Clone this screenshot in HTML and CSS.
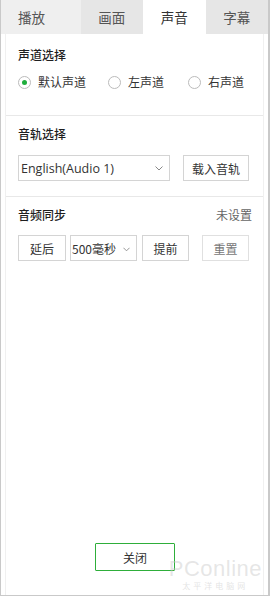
FILE: index.html
```html
<!DOCTYPE html>
<html lang="zh">
<head>
<meta charset="utf-8">
<link rel="stylesheet" href="styles.css">
</head>
<body>
<div class="window">
  <div class="tabs">
    <div class="tab tab-first">播放</div>
    <div class="tab">画面</div>
    <div class="tab active">声音</div>
    <div class="tab">字幕</div>
  </div>
  <div class="panel">
    <section class="sec sec1">
      <div class="title">声道选择</div>
      <div class="radios">
        <label class="radio checked"><span class="dot"></span>默认声道</label>
        <label class="radio r2"><span class="dot"></span>左声道</label>
        <label class="radio r3"><span class="dot"></span>右声道</label>
      </div>
    </section>
    <section class="sec sec2">
      <div class="title">音轨选择</div>
      <div class="row">
        <div class="select track"><span class="en">English(Audio 1)</span>
          <svg class="chev" width="8" height="5" viewBox="0 0 8 5"><path d="M0.5 0.5L4 4L7.5 0.5" fill="none" stroke="#888" stroke-width="1"/></svg>
        </div>
        <div class="btn load">载入音轨</div>
      </div>
    </section>
    <section class="sec sec3">
      <div class="title-row"><span class="title">音频同步</span><span class="status">未设置</span></div>
      <div class="row">
        <div class="btn delay">延后</div>
        <div class="select ms"><span>500毫秒</span>
          <svg class="chev" width="7" height="5" viewBox="0 0 8 5"><path d="M0.5 0.5L4 4L7.5 0.5" fill="none" stroke="#888" stroke-width="1"/></svg>
        </div>
        <div class="btn ahead">提前</div>
        <div class="btn reset">重置</div>
      </div>
    </section>
    <div class="spacer"></div>
    <div class="footer">
      <div class="btn close">关闭</div>
    </div>
  </div>
  <div class="watermark"><span class="wm-logo">PConline</span><span class="wm-sub">太平洋电脑网</span></div>
</div>
</body>
</html>
```
FILE: styles.css
```css
html, body {
  margin: 0;
  padding: 0;
  background: #fff;
}
body {
  font-family: "Noto Sans CJK SC", "Noto Sans", sans-serif;
  font-size: 12px;
  color: #333;
}
.window {
  position: relative;
  width: 270px;
  height: 596px;
  box-sizing: border-box;
  border-left: 1px solid #c9c9c9;
  border-right: 2px solid #c9c9c9;
  border-bottom: 1px solid #c9c9c9;
  display: flex;
  flex-direction: column;
  overflow: hidden;
}
.tabs {
  display: flex;
  height: 34px;
  flex: none;
}
.tab {
  flex: 1;
  display: flex;
  align-items: center;
  justify-content: center;
  background: #e6e6e6;
  color: #555;
  font-size: 13.5px;
}
.tab-first {
  background: #efefef;
  justify-content: flex-start;
  padding-left: 17px;
}
.tab.active {
  background: #fff;
  color: #333;
}
.panel {
  flex: 1;
  margin: 0 4px;
  border-left: 1px solid #f0f0f0;
  border-right: 1px solid #f0f0f0;
  display: flex;
  flex-direction: column;
}
.sec {
  padding: 0 11px 0 12px;
  border-bottom: 1px solid #e8e8e8;
}
.title {
  font-size: 12px;
  line-height: 18px;
  color: #1e1e1e;
  font-weight: 500;
}
.sec1 { padding-top: 12px; padding-bottom: 24px; }
.sec2 { padding-top: 9px; padding-bottom: 15px; }
.sec3 { padding-top: 9px; padding-bottom: 0; border-bottom: none; }
.radios {
  display: flex;
  margin-top: 9px;
  height: 18px;
  align-items: center;
}
.radio {
  display: flex;
  flex: none;
  align-items: center;
  white-space: nowrap;
  font-size: 12px;
  line-height: 18px;
  color: #333;
}
.dot {
  flex: none;
  width: 11px;
  height: 11px;
  border: 1px solid #bbb;
  border-radius: 50%;
  margin-right: 7px;
  box-sizing: content-box;
  display: flex;
  align-items: center;
  justify-content: center;
}
.checked .dot::after {
  content: "";
  width: 5px;
  height: 5px;
  border-radius: 50%;
  background: #1fae3c;
}
.r2 { margin-left: 22px; }
.r3 { margin-left: 24px; }
.row {
  display: flex;
  align-items: center;
  margin-top: 12px;
}
.select {
  height: 26px;
  box-sizing: border-box;
  border: 1px solid #d4d4d4;
  display: flex;
  align-items: center;
  padding-left: 2px;
  position: relative;
  background: #fff;
  white-space: nowrap;
}
.track {
  width: 152px;
}
.track .en {
  font-family: "Open Sans", "Noto Sans", sans-serif;
  font-size: 12.5px;
  color: #333;
}
.track .chev {
  position: absolute;
  right: 6px;
  top: 10px;
}
.btn {
  height: 26px;
  box-sizing: border-box;
  border: 1px solid #d4d4d4;
  display: flex;
  align-items: center;
  justify-content: center;
  font-size: 12px;
  color: #333;
  background: #fff;
  white-space: nowrap;
}
.load {
  width: 66px;
  margin-left: 13px;
}
.title-row {
  display: flex;
  justify-content: space-between;
  align-items: center;
  line-height: 18px;
}
.status {
  color: #666;
  font-size: 12px;
}
.sec3 .row { margin-top: 11px; }
.delay { width: 48px; }
.ms {
  width: 67px;
  margin-left: 4px;
  padding-left: 1px;
  font-size: 12px;
  color: #333;
}
.ms .chev {
  position: absolute;
  right: 6px;
  top: 11px;
}
.ahead { width: 47px; margin-left: 5px; }
.reset { width: 47px; margin-left: 13px; color: #777; border-color: #e0e0e0; }
.spacer { flex: 1; }
.footer {
  display: flex;
  justify-content: center;
  padding-bottom: 24px;
}
.close {
  width: 80px;
  height: 28px;
  border: 1px solid #2eae3a;
  border-radius: 1px;
  margin-left: 1px;
}
.watermark {
  position: absolute;
  right: 6px;
  bottom: 4px;
  display: flex;
  flex-direction: column;
  align-items: center;
  gap: 2px;
  pointer-events: none;
}
.wm-logo {
  font-family: "Liberation Sans", sans-serif;
  font-size: 22px;
  color: rgba(200, 200, 200, 0.45);
  letter-spacing: 0.5px;
  line-height: 20px;
}
.wm-sub {
  font-size: 8px;
  color: rgba(200, 200, 200, 0.5);
  letter-spacing: 3px;
  line-height: 10px;
}
```
